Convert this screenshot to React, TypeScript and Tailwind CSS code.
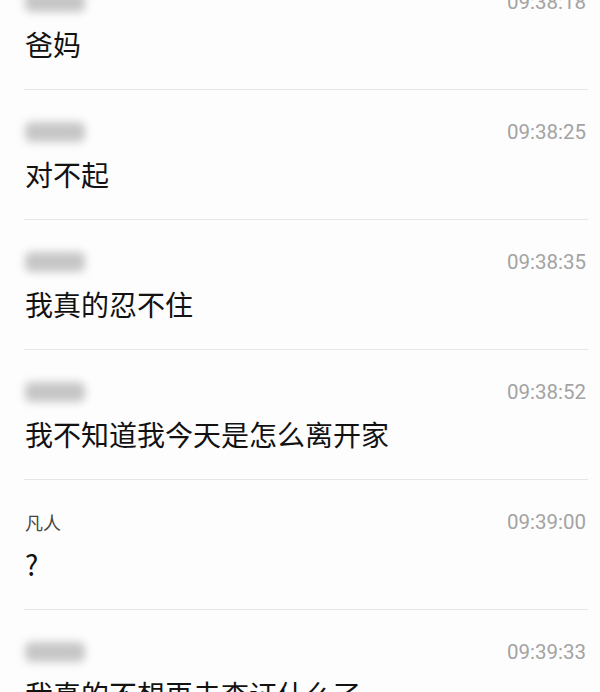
import React from 'react';

type Msg = { name: string | null; time: string; text: string };

const messages: Msg[] = [
  { name: null, time: '09:38:18', text: '爸妈' },
  { name: null, time: '09:38:25', text: '对不起' },
  { name: null, time: '09:38:35', text: '我真的忍不住' },
  { name: null, time: '09:38:52', text: '我不知道我今天是怎么离开家' },
  { name: '凡人', time: '09:39:00', text: '?' },
  { name: null, time: '09:39:33', text: '我真的不想再去查证什么了' },
];

function Row({ msg }: { msg: Msg }) {
  return (
    <div className="ml-[24px] mr-[12px] h-[130px] border-b border-[#e6e6e6] flex flex-col shrink-0">
      <div className="mt-[28px] h-[28px] flex items-center justify-between pl-[1px] pr-[2px]">
        {msg.name ? (
          <span className="text-[18px] text-[#444] leading-none">{msg.name}</span>
        ) : (
          <span className="block w-[60px] h-[20px] rounded-md bg-[#c6c6c6] blur-[4px]" />
        )}
        <span className="font-['Roboto',sans-serif] text-[20.5px] text-[#a3a3a3] leading-none">{msg.time}</span>
      </div>
      <div className="mt-[8px] h-[40px] flex items-center pl-[1px] text-[28px] text-[#121212] leading-none">
        {msg.text}
      </div>
    </div>
  );
}

export default function App() {
  return (
    <div className="w-[600px] h-[692px] overflow-hidden bg-[#fdfdfd] font-['Noto_Sans_CJK_SC','Noto_Sans',sans-serif]">
      <div className="-mt-[40px] flex flex-col">
        {messages.map((m, i) => (
          <Row key={i} msg={m} />
        ))}
      </div>
    </div>
  );
}
